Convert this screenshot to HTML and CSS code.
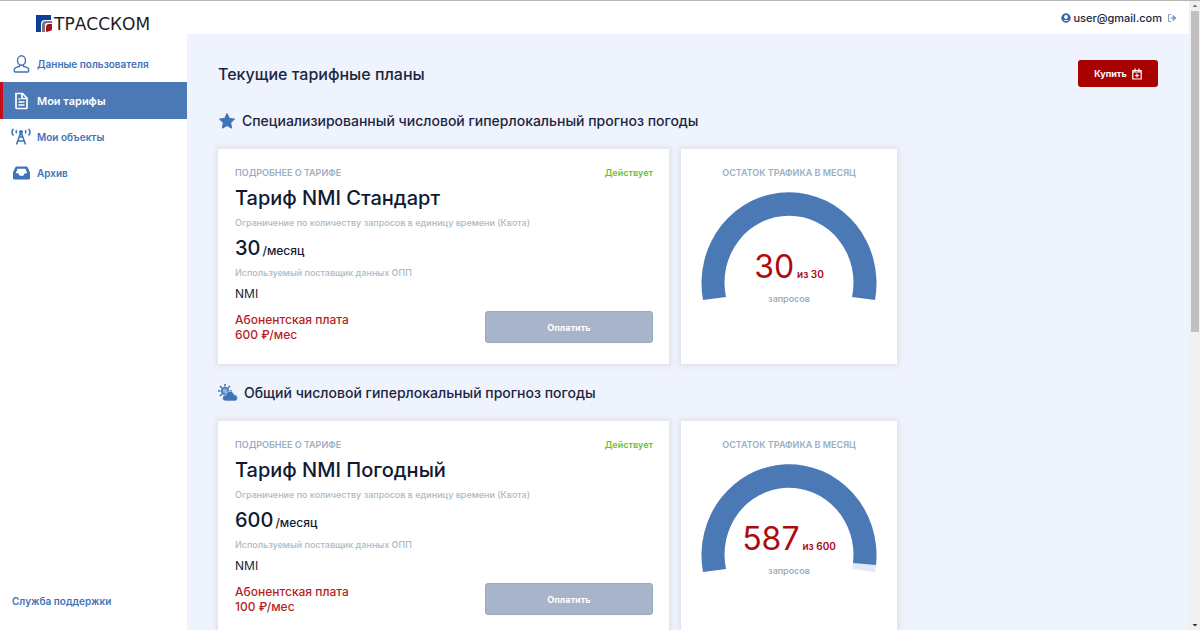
FILE: index.html
```html
<!DOCTYPE html>
<html lang="ru">
<head>
<meta charset="utf-8">
<title>Мои тарифы</title>
<link rel="stylesheet" href="styles.css">
</head>
<body>
<div class="app">
  <aside class="sidebar">
    <a class="logo" href="#">
      <svg class="logo-mark" viewBox="0 0 16 17" aria-hidden="true">
        <path d="M0 0h15v5H9Q5 5 5 9v8H0z" fill="#0b4199"/>
        <path d="M6 17V10q0-4 4-4h6v2h-5q-2 0-2 2v7z" fill="#77767c"/>
        <path d="M10 17v-5q0-3 3-3h3v5q0 2-2 2z" fill="#a3121b"/>
      </svg>
      <span>ТРАССКОМ</span>
    </a>
    <nav class="menu">
      <a class="menu-item" href="#">
        <svg class="menu-icon" viewBox="0 0 20 20" fill="none" stroke="currentColor" stroke-width="1.400" aria-hidden="true"><ellipse cx="10.500" cy="6.500" rx="4" ry="4.700"/><path d="M8.500 10.800v1.700q-4.500.7-5 2.500-.8 3 1 3h12q1.800 0 1-3-.5-1.800-5-2.500v-1.700"/></svg>
        <span>Данные пользователя</span>
      </a>
      <a class="menu-item active" href="#" aria-current="page">
        <svg class="menu-icon" viewBox="0 0 20 20" fill="none" stroke="currentColor" stroke-width="1.700" aria-hidden="true"><path d="M5 2.500h6.500L16 7v9.500q0 1-1 1H6q-1 0-1-1z"/><path d="M11 3v4.500h4.500M7.500 8h2M7.500 11h6M7.500 14h6"/></svg>
        <span>Мои тарифы</span>
      </a>
      <a class="menu-item" href="#">
        <svg class="menu-icon" viewBox="0 0 20 20" fill="none" stroke="currentColor" stroke-width="1.600" aria-hidden="true"><path d="M5.500 17.500 10 5l4.500 12.500M7 14h6M8.500 10h3M2.500 2Q-.5 5 2.500 8.500M17.500 2q3 3 0 6.500M5.700 3.200q-1 1.500 0 3M14.300 3.200q1 1.500 0 3"/><circle cx="10" cy="5" r="1.200" fill="currentColor"/></svg>
        <span>Мои объекты</span>
      </a>
      <a class="menu-item" href="#">
        <svg class="menu-icon" viewBox="0 0 20 20" aria-hidden="true"><path fill="currentColor" fill-rule="evenodd" d="M6 3.500h9q1.300 0 1.800 1L19 9.500V15q0 1.500-1.500 1.500h-14Q2 16.500 2 15V9.500l2.200-5q.5-1 1.800-1zm.5 2.300L4.800 10.300h2.400l1.500 2.500h3.600l1.500-2.500h2.400l-1.700-4.500z"/></svg>
        <span>Архив</span>
      </a>
    </nav>
    <a class="support" href="#">Служба поддержки</a>
  </aside>

  <div class="page">
    <header class="topbar">
      <svg class="user-icon" viewBox="0 0 10 10" aria-hidden="true"><circle cx="5" cy="5" r="4.200" fill="#2f68b0" stroke="#2f68b0"/><circle cx="5" cy="4" r="1.900" fill="#fff"/><path d="M2.500 8q0-1 2.500-1t2.500 1z" fill="#fff"/></svg>
      <span class="email">user@gmail.com</span>
      <a class="logout" href="#" aria-label="Выйти"><svg viewBox="0 0 10 10" fill="none" stroke="currentColor" aria-hidden="true"><path d="M4 1.500H1.500v7H4M3.500 5H7"/><path d="M6 2.500 9 5 6 7.500z" fill="currentColor"/></svg></a>
    </header>

    <main class="content">
      <div class="heading-row">
        <h1>Текущие тарифные планы</h1>
        <button class="buy" type="button">Купить
          <svg viewBox="0 0 10 12" fill="none" stroke="currentColor" stroke-width="1.200" aria-hidden="true"><path d="M.8 2.500h8.400v8.500H.8zM3 .5v3M7 .5v3M.8 4h8.400M5 5.500v4M3 7.500h4"/></svg>
        </button>
      </div>

      <section class="plan">
        <h2>
          <svg class="star" viewBox="0 0 18 18" aria-hidden="true"><path fill="#3f73b8" stroke="#3f73b8" stroke-linejoin="round" d="m9 1.500 2.300 4.900 5.200.7-3.800 3.700.9 5.400L9 13.600l-4.600 2.600.9-5.400L1.500 7.100l5.200-.7z"/></svg>
          <span>Специализированный числовой гиперлокальный прогноз погоды</span>
        </h2>
        <div class="cards">
          <article class="card details">
            <div class="card-top"><span class="label">ПОДРОБНЕЕ О ТАРИФЕ</span><span class="status">Действует</span></div>
            <h3>Тариф NMI Стандарт</h3>
            <p class="hint">Ограничение по количеству запросов в единицу времени (Квота)</p>
            <p class="quota"><span>30</span><small>/месяц</small></p>
            <p class="hint">Используемый поставщик данных ОПП</p>
            <p class="provider">NMI</p>
            <div class="payment">
              <p class="fee">Абонентская плата<br>600 ₽/мес</p>
              <button class="pay" type="button">Оплатить</button>
            </div>
          </article>
          <article class="card traffic">
            <span class="label">ОСТАТОК ТРАФИКА В МЕСЯЦ</span>
            <div class="gauge">
              <svg viewBox="0 0 176 110" aria-hidden="true"><path fill="#4b79b6" d="M2 109A87.500 91 0 1 1 174 109L151 106A64.500 67 0 1 0 25 106z"/></svg>
              <div class="reading">
                <p class="left"><span>30</span><small>из 30</small></p>
                <p class="unit">запросов</p>
              </div>
            </div>
          </article>
        </div>
      </section>

      <section class="plan">
        <h2>
          <svg class="weather" viewBox="0 0 20 18" aria-hidden="true"><g fill="#8fb0dc" stroke="#3f73b8" stroke-width="1.600"><circle cx="7" cy="7" r="3.200"/><path d="M7 0v2.500M7 11.500V14M0 7h2.500M2 2l2 2M12 2l-2 2M2 12l2-2M11.500 7H14"/></g><path fill="#3f73b8" stroke="#eff3fd" stroke-width=".6" d="M7 17q-3.500-1-2-4.500.8-1.500 2.500-1.400Q9 7 12 7t4 3.600q3.500.4 3.500 3.400 0 3-2.500 3z"/></svg>
          <span>Общий числовой гиперлокальный прогноз погоды</span>
        </h2>
        <div class="cards">
          <article class="card details">
            <div class="card-top"><span class="label">ПОДРОБНЕЕ О ТАРИФЕ</span><span class="status">Действует</span></div>
            <h3>Тариф NMI Погодный</h3>
            <p class="hint">Ограничение по количеству запросов в единицу времени (Квота)</p>
            <p class="quota"><span>600</span><small>/месяц</small></p>
            <p class="hint">Используемый поставщик данных ОПП</p>
            <p class="provider">NMI</p>
            <div class="payment">
              <p class="fee">Абонентская плата<br>100 ₽/мес</p>
              <button class="pay" type="button">Оплатить</button>
            </div>
          </article>
          <article class="card traffic">
            <span class="label">ОСТАТОК ТРАФИКА В МЕСЯЦ</span>
            <div class="gauge">
              <svg viewBox="0 0 176 110" aria-hidden="true"><path fill="#e4e9fa" d="M2 109A87.500 91 0 1 1 174 109L151 106A64.500 67 0 1 0 25 106z"/><path fill="#4b79b6" d="M2 109A87.500 91 0 1 1 175 102L152 100A64.500 67 0 1 0 25 106z"/></svg>
              <div class="reading">
                <p class="left"><span>587</span><small>из 600</small></p>
                <p class="unit">запросов</p>
              </div>
            </div>
          </article>
        </div>
      </section>
    </main>
  </div>

  <div class="scrollbar" aria-hidden="true">
    <svg viewBox="0 0 10 10"><path d="M2.500 6 5 3.500 7.500 6z" fill="#777"/></svg>
    <div class="thumb"></div>
    <svg viewBox="0 0 10 10"><path d="M2.500 4 5 6.500 7.500 4z" fill="#333"/></svg>
  </div>
</div>
</body>
</html>
```
FILE: styles.css
```css
* { box-sizing: border-box; }
body { margin: 0; font-family: Inter, "Open Sans", sans-serif; color: #1b2640; background: #fff; }
h1, h2, h3, p { margin: 0; font-weight: 500; }
a { color: inherit; text-decoration: none; }
button { font: inherit; border: 0; cursor: pointer; }
svg { display: block; flex: none; }

.app { display: flex; height: 100vh; overflow: hidden; border-top: 1px solid #b5b5b5; }

.sidebar { flex: 0 0 187px; display: flex; flex-direction: column; color: #3f73b8; font-size: 10px; font-weight: 600; }
.logo { display: flex; align-items: center; gap: 2px; padding: 12px 0 0 36px; height: 33px; color: #1d1d22; font: 17px/20px "DejaVu Sans", sans-serif; }
.logo-mark { width: 16px; height: 17px; }
.menu { display: flex; flex-direction: column; margin-top: 12px; }
.menu-item { display: flex; align-items: center; gap: 6px; height: 36px; padding-left: 11px; }
.menu-icon { width: 20px; height: 20px; }
.menu-item.active { height: 37px; padding-left: 8px; border-left: 3px solid #c40d17; background: #4b79b6; color: #fff; font-size: 11px; }
.support { margin-top: auto; padding: 0 12px 22px; line-height: 14px; }

.page { flex: 1; min-width: 0; display: flex; flex-direction: column; }
.topbar { flex: 0 0 33px; display: flex; align-items: center; justify-content: flex-end; padding-right: 12px; font-size: 11px; font-weight: 500; }
.user-icon { width: 10px; height: 10px; margin-right: 2px; }
.logout { margin-left: 5px; color: #7f9dcb; }
.logout svg { width: 10px; height: 10px; }

.content { flex: 1; min-height: 0; overflow: hidden; padding: 26px 31px 0; background: #eff3fd; }
.heading-row { display: flex; align-items: center; justify-content: space-between; margin-bottom: 22px; }
h1 { font-size: 16px; line-height: 26px; }
.buy { display: flex; align-items: center; justify-content: center; gap: 5px; width: 80px; height: 27px; padding: 0; border-radius: 3px; background: #a90000; color: #fff; font-size: 9px; font-weight: 700; }
.buy svg { width: 10px; height: 12px; }

.plan { margin-bottom: 17px; }
h2 { display: flex; align-items: center; gap: 6px; margin-bottom: 16px; font-size: 14px; line-height: 24px; }
.star { width: 18px; height: 18px; }
.weather { width: 20px; height: 18px; }

.cards { display: grid; grid-template-columns: minmax(0, 451px) 216px; gap: 12px; }
.card { background: #fff; box-shadow: 0 0 5px 2px #dfe1e9; }
.label { color: #9aafc2; font-size: 9px; line-height: 16px; font-weight: 600; }

.details { display: flex; flex-direction: column; gap: 5px; padding: 16px 16px 21px 17px; }
.card-top { display: flex; justify-content: space-between; height: 16px; }
.status { color: #66c52c; font-size: 9px; line-height: 16px; font-weight: 600; }
h3 { font-size: 20px; line-height: 24px; color: #101a33; }
.hint { color: #a9bac9; font-size: 9px; line-height: 16px; font-weight: 500; }
.quota { display: flex; align-items: baseline; gap: 2px; height: 24px; font-size: 20px; line-height: 24px; color: #101a33; }
.quota small { font-size: 12px; }
.provider { font-size: 12px; line-height: 16px; font-weight: 400; }
.payment { display: flex; align-items: center; justify-content: space-between; margin-top: 4px; }
.fee { color: #b51f24; font-size: 12px; line-height: 15px; }
.pay { width: 168px; height: 32px; border: 1px solid #98a9c3; border-radius: 3px; background: #a7b4c9; color: #fff; font-size: 9px; font-weight: 700; }

.traffic { display: flex; flex-direction: column; align-items: center; gap: 10px; padding-top: 16px; }
.gauge { display: grid; justify-items: center; }
.gauge > * { grid-area: 1 / 1; }
.gauge svg { width: 176px; height: 110px; }
.reading { padding-top: 58px; text-align: center; }
.left { display: flex; align-items: baseline; justify-content: center; gap: 3px; height: 36px; color: #ab0b0e; font-size: 32px; line-height: 36px; font-weight: 400; }
.left small { font-size: 10px; line-height: 12px; font-weight: 600; }
.unit { margin-top: 6px; color: #8fa6b9; font-size: 9px; line-height: 16px; }

.scrollbar { flex: 0 0 11px; display: flex; flex-direction: column; align-items: center; justify-content: space-between; background: #f0f0f0; }
.scrollbar svg { width: 10px; height: 10px; }
.thumb { width: 8px; height: 51%; background: #c0c0c0; margin-bottom: auto; }
```
